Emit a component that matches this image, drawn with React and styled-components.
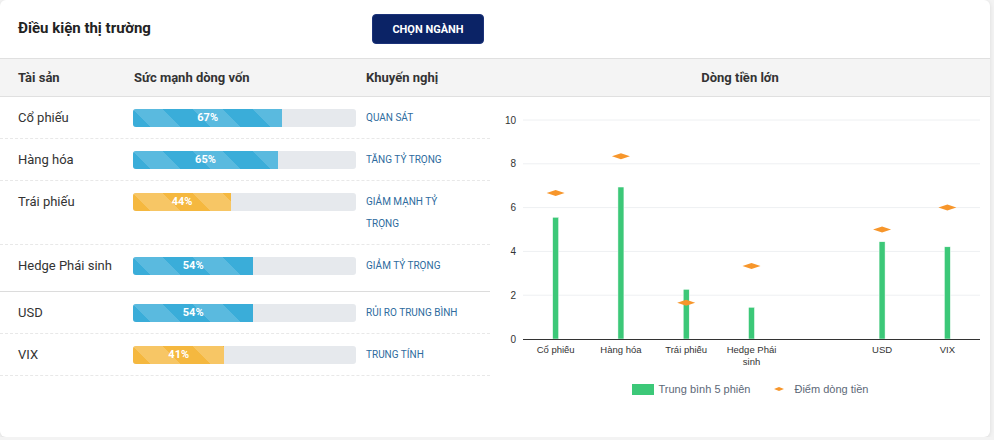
import React from "react";
import styled, { createGlobalStyle, css } from "styled-components";

const GlobalStyle = createGlobalStyle`
  html, body {
    margin: 0;
    padding: 0;
    background: #f3f3f3;
  }
  body {
    font-family: Roboto, "Noto Sans", "Liberation Sans", sans-serif;
    color: #333;
  }
`;

const assets = [
  { name: "Cổ phiếu", pct: 67, tone: "blue", rec: "QUAN SÁT" },
  { name: "Hàng hóa", pct: 65, tone: "blue", rec: "TĂNG TỶ TRỌNG" },
  { name: "Trái phiếu", pct: 44, tone: "yellow", rec: "GIẢM MẠNH TỶ TRỌNG" },
  { name: "Hedge Phái sinh", pct: 54, tone: "blue", rec: "GIẢM TỶ TRỌNG", groupEnd: true },
  { name: "USD", pct: 54, tone: "blue", rec: "RỦI RO TRUNG BÌNH" },
  { name: "VIX", pct: 41, tone: "yellow", rec: "TRUNG TÍNH" },
];

const series = [
  { label: ["Cổ phiếu"], avg: 5.56, point: 6.67 },
  { label: ["Hàng hóa"], avg: 6.94, point: 8.34 },
  { label: ["Trái phiếu"], avg: 2.27, point: 1.66 },
  { label: ["Hedge Phái", "sinh"], avg: 1.45, point: 3.33 },
  { label: [], avg: null, point: null },
  { label: ["USD"], avg: 4.44, point: 5.0 },
  { label: ["VIX"], avg: 4.21, point: 6.0 },
];

const tones = {
  blue: { base: "#3aadd9", stripe: "rgba(255,255,255,0.16)" },
  yellow: { base: "#f5b83f", stripe: "rgba(255,255,255,0.2)" },
};

const Card = styled.div`
  width: 990px;
  height: 437px;
  background: #fff;
  border-radius: 6px;
  box-shadow: 0 1px 4px rgba(0, 0, 0, 0.1);
  overflow: hidden;
`;

const Header = styled.div`
  width: 490px;
  height: 58px;
  box-sizing: border-box;
  padding: 0 6px 0 18px;
  display: flex;
  align-items: center;
  justify-content: space-between;
`;

const Title = styled.h2`
  margin: 0 0 2px;
  font-size: 15px;
  font-weight: 700;
  color: #222;
`;

const PickButton = styled.button`
  width: 112px;
  height: 30px;
  border: 1px solid #1b3279;
  border-radius: 4px;
  background: #0b2366;
  color: #fff;
  font-family: Roboto, "Liberation Sans", sans-serif;
  font-size: 11px;
  font-weight: 700;
  cursor: pointer;
`;

const Body = styled.div`
  display: grid;
  grid-template-columns: 490px 1fr;
`;

const HeadBar = styled.div`
  height: 37px;
  background: #f4f4f4;
  border-top: 1px solid #e0e0e0;
  border-bottom: 1px solid #e0e0e0;
  font-size: 13px;
  font-weight: 700;
  color: #333;
  display: grid;
  align-items: center;
  ${(p) =>
    p.$centered &&
    css`
      justify-content: center;
    `}
`;

const columns = css`
  grid-template-columns: 115px 241px 134px;
`;

const TableHead = styled(HeadBar)`
  ${columns}
`;

const HeadCell = styled.div`
  padding-left: ${(p) => (p.$first ? "18px" : p.$narrow ? "10px" : "19px")};
`;

const Row = styled.div`
  display: grid;
  ${columns}
  align-items: start;
  font-size: 13px;
  line-height: 22px;
  padding: 10px 0 ${(p) => (p.$groupEnd ? "14px" : "9px")};
  border-bottom: 1px ${(p) => (p.$groupEnd ? "solid #dcdcdc" : "dashed #e8e8e8")};
`;

const NameCell = styled.div`
  padding-left: 18px;
  color: #333;
`;

const BarCell = styled.div`
  padding-left: 18px;
  height: 22px;
  display: flex;
  align-items: center;
`;

const Track = styled.div`
  width: 223px;
  height: 18px;
  border-radius: 3px;
  background: #e6e9ed;
  overflow: hidden;
  display: flex;
`;

const Fill = styled.div`
  height: 100%;
  background-color: ${(p) => tones[p.$tone].base};
  background-image: linear-gradient(
    45deg,
    ${(p) => tones[p.$tone].stripe} 25%,
    transparent 25%,
    transparent 50%,
    ${(p) => tones[p.$tone].stripe} 50%,
    ${(p) => tones[p.$tone].stripe} 75%,
    transparent 75%,
    transparent
  );
  background-size: 60px 60px;
  color: #fff;
  font-size: 11px;
  font-weight: 700;
  line-height: 18px;
  text-align: center;
`;

const RecCell = styled.div`
  padding: 0 24px 0 10px;
  font-size: 10px;
  color: #2e6b9e;
  line-height: 22px;
`;

const Panel = styled.div`
  display: flex;
  flex-direction: column;
`;

const Legend = styled.div`
  display: flex;
  justify-content: center;
  align-items: center;
  gap: 12px;
  padding-left: 20px;
  margin-top: 8px;
  font-family: "Liberation Sans", Arial, sans-serif;
  font-size: 11px;
  color: #5d6877;
`;

const LegendItem = styled.div`
  display: flex;
  align-items: center;
  gap: ${(p) => (p.$wide ? "10px" : "5px")};
  margin-right: ${(p) => (p.$wide ? "0" : "12px")};
`;

const Swatch = styled.span`
  width: 22px;
  height: 11px;
  background: #3cc878;
`;

// chart geometry (px, relative to svg)
const W = 500;
const H = 278;
const plotLeft = 33;
const plotRight = 490;
const plotTop = 23;
const plotBottom = 242;
const unit = (plotBottom - plotTop) / 10;
const slot = (plotRight - plotLeft) / series.length;
const yOf = (v) => plotBottom - v * unit;

function Chart() {
  return (
    <svg width={W} height={H} style={{ display: "block" }}>
      {[0, 2, 4, 6, 8, 10].map((t) => (
        <g key={t}>
          {t > 0 && (
            <line x1={plotLeft} x2={plotRight} y1={yOf(t)} y2={yOf(t)} stroke="#eef0f2" strokeWidth="1" />
          )}
          <text
            x={26}
            y={yOf(t) + 3.5}
            textAnchor="end"
            fontFamily="Liberation Sans, Arial, sans-serif"
            fontSize="10"
            fill="#333"
          >
            {t}
          </text>
        </g>
      ))}
      {series.map((s, i) => {
        const cx = plotLeft + slot * i + slot / 2;
        return (
          <g key={i}>
            {s.avg != null && (
              <rect
                x={cx - 3}
                y={yOf(s.avg)}
                width="6"
                height={plotBottom - yOf(s.avg)}
                fill="#3cc878"
                stroke="#fff"
                strokeWidth="0.5"
              />
            )}
            {s.point != null && (
              <polygon
                points={`${cx - 9},${yOf(s.point)} ${cx},${yOf(s.point) - 3} ${cx + 9},${yOf(s.point)} ${cx},${yOf(s.point) + 3}`}
                fill="#f7962b"
              />
            )}
            {s.label.map((l, j) => (
              <text
                key={j}
                x={cx}
                y={plotBottom + 14 + j * 12}
                textAnchor="middle"
                fontFamily="Liberation Sans, Arial, sans-serif"
                fontSize="9.5"
                fill="#333"
              >
                {l}
              </text>
            ))}
          </g>
        );
      })}
      <line x1={plotLeft} x2={plotRight} y1={plotBottom + 0.5} y2={plotBottom + 0.5} stroke="#333" strokeWidth="1" />
    </svg>
  );
}

export default function App() {
  return (
    <>
      <GlobalStyle />
      <Card>
        <Header>
          <Title>Điều kiện thị trường</Title>
          <PickButton>CHỌN NGÀNH</PickButton>
        </Header>
        <Body>
          <div>
            <TableHead>
              <HeadCell $first>Tài sản</HeadCell>
              <HeadCell>Sức mạnh dòng vốn</HeadCell>
              <HeadCell $narrow>Khuyến nghị</HeadCell>
            </TableHead>
            {assets.map((a) => (
              <Row key={a.name} $groupEnd={a.groupEnd}>
                <NameCell>{a.name}</NameCell>
                <BarCell>
                  <Track>
                    <Fill $tone={a.tone} style={{ width: `${a.pct}%` }}>
                      {a.pct}%
                    </Fill>
                  </Track>
                </BarCell>
                <RecCell>{a.rec}</RecCell>
              </Row>
            ))}
          </div>
          <Panel>
            <HeadBar $centered>Dòng tiền lớn</HeadBar>
            <Chart />
            <Legend>
              <LegendItem>
                <Swatch />
                Trung bình 5 phiên
              </LegendItem>
              <LegendItem $wide>
                <svg width="10" height="6">
                  <polygon points="0,3 5,1 10,3 5,5" fill="#f7962b" />
                </svg>
                Điểm dòng tiền
              </LegendItem>
            </Legend>
          </Panel>
        </Body>
      </Card>
    </>
  );
}
